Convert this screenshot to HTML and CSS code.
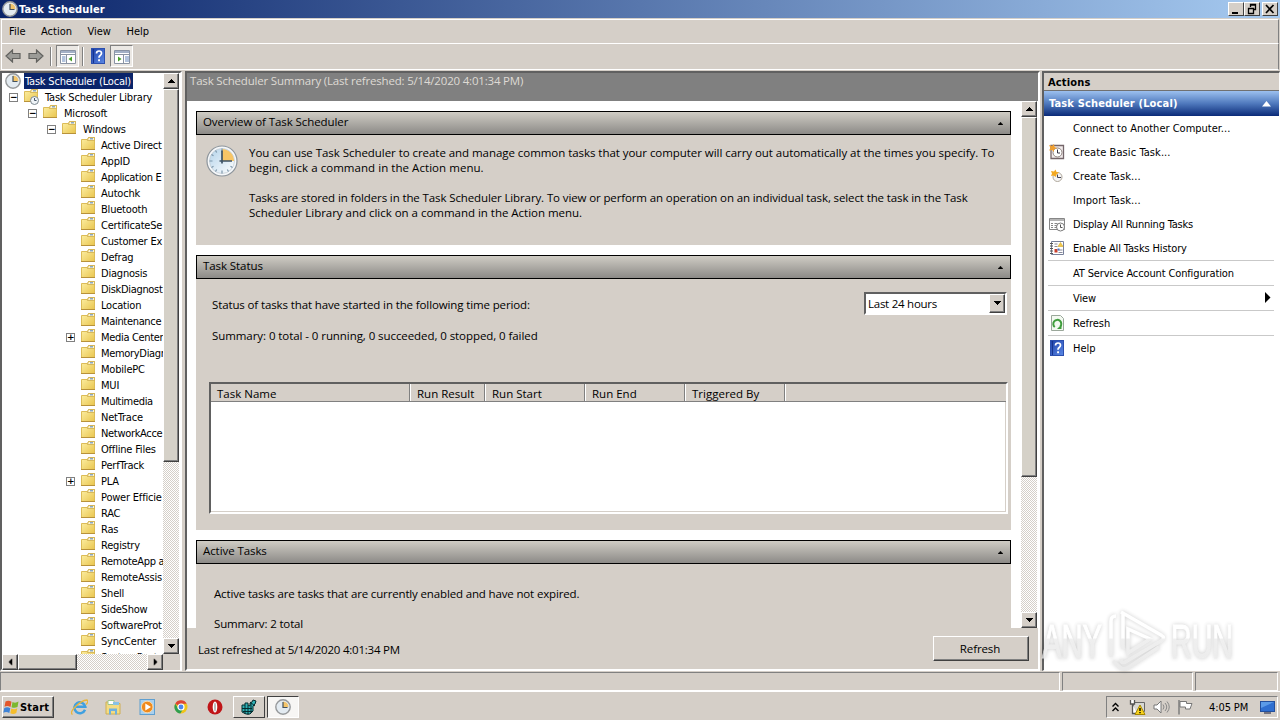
FILE: index.html
```html
<!DOCTYPE html>
<html lang="en">
<head>
<meta charset="utf-8">
<title>Task Scheduler</title>
<link rel="stylesheet" href="styles.css">
</head>
<body>
<svg class="defs" aria-hidden="true">
  <defs>
    <linearGradient id="gFolder" x1="0" y1="0" x2="1" y2="1"><stop offset="0" stop-color="#fdf0a6"/><stop offset="1" stop-color="#e9c54e"/></linearGradient>
    <linearGradient id="gFace" x1="0" y1="0" x2="1" y2="1"><stop offset="0" stop-color="#b4d3ea"/><stop offset="1" stop-color="#ffffff"/></linearGradient>
    <linearGradient id="gHelp" x1="0" y1="0" x2="1" y2="1"><stop offset="0" stop-color="#1c3fa8"/><stop offset="1" stop-color="#5c8ae6"/></linearGradient>
    <linearGradient id="gMark" gradientUnits="userSpaceOnUse" x1="0" y1="4" x2="0" y2="62"><stop offset="0" stop-color="#fff"/><stop offset=".5" stop-color="#fff"/><stop offset=".52" stop-color="#ececec"/><stop offset="1" stop-color="#e6e6e6"/></linearGradient>
    <symbol id="folder" viewBox="0 0 16 16">
      <path d="M1.500 2.500h6l1-2h6v12h-13z" fill="url(#gFolder)" stroke="#dcbc58"/>
      <path d="M7.500 3.500l1-3h6v3z" fill="#fff6cf" stroke="#c9a53e" stroke-width=".7"/><path d="M10 1.200h3v1.200h-3z" fill="#6f97c4"/>
      <path d="M1 12.500h14" stroke="#b8923a"/>
    </symbol>
    <symbol id="clock" viewBox="0 0 32 32">
      <circle cx="16" cy="16" r="15" fill="#f6f8fa" stroke="#8d959c" stroke-width="1.200"/>
      <circle cx="16" cy="16" r="12.500" fill="url(#gFace)" stroke="#c3ccd3" stroke-width=".8"/>
      <path d="M16 16V4a12 12 0 0 1 12 12z" fill="#f7c566"/>
      <path d="M16 3.500v3M16 25.500v3M3.500 16h3M9.500 5.500l1.200 2M5.500 9.500l2 1.200M5.500 22.500l2-1.200M9.500 26.500l1.200-2M22.500 26.500l-1.200-2M26.500 22.500l-2-1.200" stroke="#7d96aa" stroke-width="1.200"/>
      <path d="M16 5.500v13M13.500 16H26" stroke="#3f5366" stroke-width="1.700" fill="none"/>
    </symbol>
    <symbol id="clockSmall" viewBox="0 0 16 16">
      <circle cx="8" cy="8" r="7.200" fill="#e3ebf1" stroke="#96999b" stroke-width="1.400"/>
      <path d="M8 8V2.500A5.500 5.500 0 0 1 13.500 8z" fill="#f4c56a"/>
      <path d="M8 3v5.500h4.500" fill="none" stroke="#44525e" stroke-width="1.200"/>
    </symbol>
    <symbol id="help" viewBox="0 0 14 16">
      <rect x=".5" y=".5" width="13" height="15" fill="url(#gHelp)" stroke="#2c4fae"/><path d="M2.500 1v14" stroke="#16348e"/>
      <path d="M5.500 5.500q0-2.500 2.500-2.500t2.500 2.300q0 1.300-1.300 2.200t-1.200 2.200" fill="none" stroke="#fff" stroke-width="1.700"/><rect x="7.100" y="11.300" width="1.900" height="1.900" fill="#fff"/>
    </symbol>
    <symbol id="arrow" viewBox="0 0 16 14">
      <path d="M1 7l6.500-6v3.500H15v5H7.500V13z" fill="#9b9b97" stroke="#62625f" stroke-width="1.200"/>
    </symbol>
    <symbol id="up" viewBox="0 0 7 4"><path d="M0 4h7V3H6V2H5V1H4V0H3v1H2v1H1v1H0z" fill="currentColor"/></symbol>
    <symbol id="flag" viewBox="0 0 16 16"><path d="M2 1v14.500" stroke="#777" stroke-width="1.400"/><path d="M3 2.500h6.500v2h5.500l-2 5.500H8.500v-2H3z" fill="#fff" stroke="#777"/></symbol>
  </defs>
</svg>
<div class="desktop">
  <header class="titlebar">
    <svg class="i16"><use href="#clockSmall"/></svg>
    <span class="title">Task Scheduler</span>
    <div class="winbtns">
      <div class="wb"><svg width="14" height="12"><path d="M3 9h6v2H3z"/></svg></div>
      <div class="wb"><svg width="14" height="12"><path d="M5.500 4V1.500h5v5H9M5 2h6M3.500 5.500h5v5h-5zM3 5.500h6" fill="none" stroke="#000" stroke-width="1.300"/></svg></div>
      <div class="wb close"><svg width="14" height="12"><path d="M3 2l7.500 8M10.500 2L3 10" stroke="#000" stroke-width="1.700"/></svg></div>
    </div>
  </header>
  <nav class="menu"><span>File</span><span>Action</span><span>View</span><span>Help</span></nav>
  <div class="toolbar">
    <svg class="arr"><use href="#arrow"/></svg>
    <svg class="arr flip"><use href="#arrow"/></svg>
    <i class="tsep"></i>
    <div class="tog"><svg width="16" height="14"><path d="M.5.500h15v13H.5z" fill="#fff" stroke="#8a93a3"/><path d="M1 1h14v2H1z" fill="#a3b0c6"/><path d="M1 4.500h14M6.500 5v9" stroke="#8a93a3"/><path d="M2 7h3.500M2 9h3.500M2 11h3.500" stroke="#6688bb"/><path d="M12 6.500v5L8.500 9z" fill="#4aa02c"/></svg></div>
    <i class="tsep s2"></i>
    <svg class="hp"><use href="#help"/></svg>
    <div class="tog t2"><svg width="16" height="14"><path d="M.5.500h15v13H.5z" fill="#fff" stroke="#8a93a3"/><path d="M1 1h14v2H1z" fill="#a3b0c6"/><path d="M1 4.500h14M9.500 5v9" stroke="#8a93a3"/><path d="M11 7h4M11 9h4M11 11h4" stroke="#6688bb"/><path d="M4 6.500v5L7.500 9z" fill="#4aa02c"/></svg></div>
  </div>
  <main class="panes">
    <section class="tree">
      <div class="treerow">
        <div class="list">
          <div class="row l0"><svg class="i16"><use href="#clockSmall"/></svg><span class="sel">Task Scheduler (Local)</span></div>
          <div class="row l1"><b class="ex">−</b><svg class="i16"><use href="#folder"/><circle cx="11.500" cy="11.500" r="4" fill="#eef3f7" stroke="#7b8790"/><path d="M11.500 9v2.500h2" fill="none" stroke="#456"/></svg><span>Task Scheduler Library</span></div>
          <div class="row l2"><b class="ex">−</b><svg class="i16"><use href="#folder"/></svg><span>Microsoft</span></div>
          <div class="row l3"><b class="ex">−</b><svg class="i16"><use href="#folder"/></svg><span>Windows</span></div>
          <div class="row"><svg class="i16"><use href="#folder"/></svg><span>Active Direct</span></div>
          <div class="row"><svg class="i16"><use href="#folder"/></svg><span>AppID</span></div>
          <div class="row"><svg class="i16"><use href="#folder"/></svg><span class="tight">Application E</span></div>
          <div class="row"><svg class="i16"><use href="#folder"/></svg><span>Autochk</span></div>
          <div class="row"><svg class="i16"><use href="#folder"/></svg><span>Bluetooth</span></div>
          <div class="row"><svg class="i16"><use href="#folder"/></svg><span>CertificateSe</span></div>
          <div class="row"><svg class="i16"><use href="#folder"/></svg><span>Customer Ex</span></div>
          <div class="row"><svg class="i16"><use href="#folder"/></svg><span>Defrag</span></div>
          <div class="row"><svg class="i16"><use href="#folder"/></svg><span>Diagnosis</span></div>
          <div class="row"><svg class="i16"><use href="#folder"/></svg><span class="tight">DiskDiagnost</span></div>
          <div class="row"><svg class="i16"><use href="#folder"/></svg><span>Location</span></div>
          <div class="row"><svg class="i16"><use href="#folder"/></svg><span class="tight">Maintenance</span></div>
          <div class="row l4"><b class="ex">+</b><svg class="i16"><use href="#folder"/></svg><span class="tight">Media Center</span></div>
          <div class="row"><svg class="i16"><use href="#folder"/></svg><span class="tight">MemoryDiagr</span></div>
          <div class="row"><svg class="i16"><use href="#folder"/></svg><span>MobilePC</span></div>
          <div class="row"><svg class="i16"><use href="#folder"/></svg><span>MUI</span></div>
          <div class="row"><svg class="i16"><use href="#folder"/></svg><span class="tight">Multimedia</span></div>
          <div class="row"><svg class="i16"><use href="#folder"/></svg><span>NetTrace</span></div>
          <div class="row"><svg class="i16"><use href="#folder"/></svg><span class="tight">NetworkAcce</span></div>
          <div class="row"><svg class="i16"><use href="#folder"/></svg><span>Offline Files</span></div>
          <div class="row"><svg class="i16"><use href="#folder"/></svg><span>PerfTrack</span></div>
          <div class="row l4"><b class="ex">+</b><svg class="i16"><use href="#folder"/></svg><span>PLA</span></div>
          <div class="row"><svg class="i16"><use href="#folder"/></svg><span>Power Efficie</span></div>
          <div class="row"><svg class="i16"><use href="#folder"/></svg><span>RAC</span></div>
          <div class="row"><svg class="i16"><use href="#folder"/></svg><span>Ras</span></div>
          <div class="row"><svg class="i16"><use href="#folder"/></svg><span>Registry</span></div>
          <div class="row"><svg class="i16"><use href="#folder"/></svg><span class="tight">RemoteApp a</span></div>
          <div class="row"><svg class="i16"><use href="#folder"/></svg><span>RemoteAssis</span></div>
          <div class="row"><svg class="i16"><use href="#folder"/></svg><span>Shell</span></div>
          <div class="row"><svg class="i16"><use href="#folder"/></svg><span>SideShow</span></div>
          <div class="row"><svg class="i16"><use href="#folder"/></svg><span>SoftwareProt</span></div>
          <div class="row"><svg class="i16"><use href="#folder"/></svg><span>SyncCenter</span></div>
          <div class="row"><svg class="i16"><use href="#folder"/></svg><span>SystemRest</span></div>
        </div>
        <div class="vs"><div class="sb"><svg class="tri"><use href="#up"/></svg></div><div class="thumb tv"></div><i class="grow"></i><div class="sb"><svg class="tri down"><use href="#up"/></svg></div></div>
      </div>
      <div class="hrow"><div class="hs"><div class="sb"><svg class="tri left"><use href="#up"/></svg></div><div class="thumb th"></div><i class="grow"></i><div class="sb"><svg class="tri right"><use href="#up"/></svg></div></div></div>
    </section>
    <section class="center">
      <div class="chead seg">Task Scheduler Summary (Last refreshed: 5/14/2020 4:01:34 PM)</div>
      <div class="cbody">
        <div class="cards">
          <article class="card c1">
            <h2 class="seg"><span>Overview of Task Scheduler</span><svg class="cu"><use href="#up"/></svg></h2>
            <div class="over seg">
              <svg class="i32"><use href="#clock"/></svg>
              <div class="paras"><p class="first">You can use Task Scheduler to create and manage common tasks that your computer will carry out automatically at the times you specify. To</p><p>begin, click a command in the Action menu.</p><p class="gap">Tasks are stored in folders in the Task Scheduler Library. To view or perform an operation on an individual task, select the task in the Task</p><p class="last">Scheduler Library and click on a command in the Action menu.</p></div>
            </div>
          </article>
          <article class="card c2">
            <h2 class="seg"><span>Task Status</span><svg class="cu"><use href="#up"/></svg></h2>
            <div class="status seg">
              <div class="sline"><span class="s1">Status of tasks that have started in the following time period:</span><div class="combo"><span>Last 24 hours</span><div class="sb"><svg class="tri down"><use href="#up"/></svg></div></div></div>
              <div class="sum">Summary: 0 total - 0 running, 0 succeeded, 0 stopped, 0 failed</div>
              <div class="table"><div class="thead"><span>Task Name</span><span>Run Result</span><span>Run Start</span><span>Run End</span><span>Triggered By</span></div></div>
            </div>
          </article>
          <article class="card c3">
            <h2 class="seg"><span>Active Tasks</span><svg class="cu"><use href="#up"/></svg></h2>
            <div class="active seg"><p>Active tasks are tasks that are currently enabled and have not expired.</p><p class="a2">Summary: 2 total</p></div>
          </article>
        </div>
        <div class="vs"><div class="sb"><svg class="tri"><use href="#up"/></svg></div><div class="thumb cv"></div><i class="grow"></i><div class="sb"><svg class="tri down"><use href="#up"/></svg></div></div>
      </div>
      <footer class="cfoot seg"><span>Last refreshed at 5/14/2020 4:01:34 PM</span><div class="btn">Refresh</div></footer>
    </section>
    <aside class="actions">
      <div class="ahead">Actions</div>
      <div class="agrad"><span>Task Scheduler (Local)</span><svg class="au"><path d="M0 5.500h9L4.500 0z" fill="#fff"/></svg></div>
      <div class="a"><i class="i16"></i><span class="wide">Connect to Another Computer...</span></div>
      <div class="a"><svg class="i16"><path d="M2 1.500h12.500v13H2z" fill="#f2ecec" stroke="#74666a" stroke-width="1.300"/><circle cx="8.500" cy="8.500" r="4.500" fill="#fff" stroke="#8f8380"/><path d="M8.500 5.500v3.500H11" fill="none" stroke="#334"/><path d="M0 1l3 1 2-2 .5 3L8 4 5 5.500 5 8 3 6 0 6.500l1.500-2.500z" fill="#f0a030"/></svg><span class="wider">Create Basic Task...</span></div>
      <div class="a"><svg class="i16"><circle cx="8.500" cy="9" r="4.500" fill="#f4f4f4" stroke="#b0a89c"/><path d="M8.500 6.500V9.500H12" fill="none" stroke="#445"/><path d="M2 3l3 .5 1.500-2 1 2.500 2.500.5-2.500 2L7 9 4.500 7.500 2 8l1-2.500z" fill="#f3a922"/></svg><span class="wider">Create Task...</span></div>
      <div class="a"><i class="i16"></i><span class="wider">Import Task...</span></div>
      <div class="a"><svg class="i16"><path d="M.5 2.500h15v11H.5z" fill="#fff" stroke="#868686"/><path d="M1 3h14v2H1z" fill="#b5b5b5"/><path d="M2 7.500h2M5.500 7.500h3M2 9.500h2M5.500 9.500h3M2 11.500h2M5.500 11.500h3" stroke="#888"/><circle cx="11.500" cy="11" r="4" fill="#fff" stroke="#7a7a7a"/><path d="M11.500 8.500V11.500h2" fill="none" stroke="#555"/></svg><span class="tight">Display All Running Tasks</span></div>
      <div class="a"><svg class="i16"><path d="M2.500 1.500h12v13h-12z" fill="#fff" stroke="#77809a"/><path d="M1 3.500h3M1 6h3M1 8.500h3M1 11h3M1 13.500h3" stroke="#555"/><path d="M5.500 4h3M5.500 6.500h3M9.500 10h4M9.500 12.500h4" stroke="#8a8a9a"/><path d="M9 6.500l2.500-4 2.500 4z" fill="#f2c84a" stroke="#d4a82a" stroke-width=".6"/><path d="M5.500 9h3v3.500h-3z" fill="#c8402c"/><path d="M8.500 8.500h2v2h-2z" fill="#4a74c8"/></svg><span>Enable All Tasks History</span></div>
      <hr>
      <div class="a"><i class="i16"></i><span>AT Service Account Configuration</span></div>
      <hr>
      <div class="a"><i class="i16"></i><span>View</span><svg class="sub"><path d="M0 0l5.500 5.500L0 11z"/></svg></div>
      <hr>
      <div class="a"><svg class="i16"><path d="M2.500.5h9l3 3v12h-12z" fill="#f3f9f1" stroke="#9aa79a"/><path d="M5.800 12a4 4 0 1 1 5.500-.5" fill="none" stroke="#3f9d3c" stroke-width="2"/><path d="M12.500 9.500v4.500H8z" fill="#3f9d3c"/></svg><span class="wide">Refresh</span></div>
      <hr>
      <div class="a"><svg class="i16"><use href="#help"/></svg><span class="wide">Help</span></div>
    </aside>
  </main>
  <div class="sbar"><i class="s-a"></i><i class="s-b"></i><i class="s-c"></i></div>
  <footer class="taskbar">
    <div class="start"><svg width="17" height="16"><path d="M2.500 2.500q3-1.800 6 .2L7.500 8q-3-1.700-6-.3z" fill="#e4572b"/><path d="M9.500 3q3 1.500 6-.5L14.500 8q-3 1.500-6 .2z" fill="#7cb82f"/><path d="M1.300 9q3-1.500 6 .2L6.300 14q-3-1.700-6-.2z" fill="#3f83d6"/><path d="M8.300 9.500q3 1.500 6-.2L13.300 14q-3 1.800-6 .2z" fill="#f5bd2b"/></svg><b>Start</b></div>
    <div class="quick">
      <svg class="q"><path d="M14 10.800a5.500 5.500 0 1 1 .3-3H5" fill="none" stroke="#3fa0e0" stroke-width="2.500"/><path d="M1.500 15.500q-3-2 3-8T16 1q2 1.500-1 4.500" fill="none" stroke="#e9b63a" stroke-width="1.300"/></svg>
      <svg class="q"><path d="M1 3h5l1 1.500h8V15H1z" fill="#f3dc82" stroke="#cfae52"/><path d="M3 1.500h6v4H3z" fill="#fff" stroke="#9cc58c"/><path d="M8 3h6v3H8z" fill="#86c2e6"/><path d="M4 15.500V9.500h8v6H10V12H6v3.500z" fill="#6fb0dd"/></svg>
      <svg class="q"><rect x="1" y="0.500" width="14.500" height="15" fill="#a9d0ee" stroke="#5f9fd0"/><circle cx="8.200" cy="8" r="5.800" fill="#f08a1c" stroke="#fbd9a8"/><path d="M6.300 4.500v7L12 8z" fill="#fff"/></svg>
      <svg class="q"><circle cx="8" cy="8" r="6.500" fill="#f0c419"/><path d="M8 8L2.300 4.700A6.500 6.500 0 0 1 13.700 4.800L8 4.800z" fill="#dd4436"/><path d="M2.300 4.700A6.500 6.500 0 0 0 7.300 14.500L10.500 9.500 5.200 9.500z" fill="#2f9e50"/><circle cx="8" cy="8" r="3" fill="#4b86ee" stroke="#fff" stroke-width="1.200"/></svg>
      <svg class="q"><circle cx="8" cy="8" r="7.500" fill="#c01518"/><ellipse cx="8" cy="8" rx="2.300" ry="5.500" fill="#fff"/><ellipse cx="8" cy="8" rx="1" ry="4.500" fill="#b9b9b9"/></svg>
    </div>
    <div class="tb raised"><svg width="18" height="16"><path d="M2 6h3V4h3v2l2 1V4l2-1 1-2 3 1-1 3-2 2v5l-3 3H6l-4-2z" fill="#2fb0b5" stroke="#052c2e"/><path d="M2 9.500h10M3 12.500h9M5 6v9M8 6v10M11 4v10M10 3l5 4" stroke="#052c2e"/></svg></div>
    <div class="tb pressed"><svg width="16" height="16"><use href="#clockSmall"/></svg></div>
    <div class="tray">
      <svg width="7" height="10"><path d="M.5 4.500l3-3 3 3M.5 9l3-3 3 3" fill="none" stroke="#000" stroke-width="1.400"/></svg>
      <svg class="t-net" width="17" height="16"><path d="M4.500 3.500h11v9h-11z" fill="#d8d8d4" stroke="#666"/><path d="M1.500 1v4h4V1M3.500 5v9.500H8" fill="#fff" stroke="#555" stroke-width="1.300"/><path d="M11 6l5 9.500H6z" fill="#f8d21c" stroke="#a58600"/><path d="M11 9v3M11 13v1.300" stroke="#000" stroke-width="1.400"/></svg>
      <svg class="t-vol" width="17" height="14"><path d="M1 5h3l4-4v12L4 9H1z" fill="#fff" stroke="#777"/><path d="M10 4.500q2 2.500 0 5M12 3q3.500 4 0 8M14 1.500q4.500 5.500 0 11" fill="none" stroke="#888"/></svg>
      <svg class="t-flag" width="16" height="16"><use href="#flag"/></svg>
      <span class="time">4:05 PM</span>
      <svg class="t-desk" width="15" height="13"><rect x=".5" y=".5" width="14" height="10" fill="#2f6fd0" stroke="#234f9c"/><path d="M1 1h13L1 7z" fill="#5b9be8"/><path d="M4 12h7" stroke="#556" stroke-width="1.500"/></svg>
    </div>
  </footer>
  <svg class="mark" width="200" height="70" viewBox="0 0 200 70">
    <g class="mtext"><text x="5" y="53" textLength="60" lengthAdjust="spacingAndGlyphs">ANY</text><text x="134" y="53" textLength="62" lengthAdjust="spacingAndGlyphs">RUN</text></g>
    <path class="mlogo" d="M79 11q-5 0-5 5v36M86 9v35M84 7l40 23q5 3 0 6L90 56q-6 4-6-2M91 24v24l22-14zM76 56l8 7q4 2 8-1l30-20"/>
  </svg>
</div>
</body>
</html>
```
FILE: styles.css
```css
* { box-sizing: border-box; }
body { margin: 0; width: 1280px; height: 720px; overflow: hidden; background: #d5cfc8; font: 11px/16px "DejaVu Sans Condensed", "DejaVu Sans", sans-serif; font-stretch: condensed; letter-spacing: -0.2px; color: #000; }
.defs { position: absolute; width: 0; height: 0; }
svg { display: block; flex: none; }
.desktop { position: relative; display: flex; flex-direction: column; width: 1280px; height: 720px; white-space: nowrap; }
.i16 { width: 16px; height: 16px; flex: none; }
.titlebar { height: 18px; display: flex; align-items: center; padding: 0 2px; gap: 1px; background: linear-gradient(90deg, #0a246a, #a6caf0); color: #fff; font-weight: bold; letter-spacing: 0.15px; }
.title { flex: 1; padding-top: 2px; }
.winbtns { display: flex; }
.wb { width: 16px; height: 14px; background: #d5cfc8; border: 1px solid; border-color: #fff #404040 #404040 #fff; }
.wb.close { margin-left: 2px; }
.menu { height: 25px; border: 1px solid #fff; border-color: #fff #808080 #fff #fff; margin: 1px 1px 0; display: flex; align-items: center; padding: 2px 0 0 7px; gap: 15.5px; letter-spacing: 0; }
.toolbar { height: 26px; margin: 0 1px; border: solid; border-width: 0 1px 1px; border-color: #fff #808080 #fff #fff; display: flex; align-items: center; padding-left: 3px; }
.arr { width: 16px; height: 14px; }
.flip { transform: scaleX(-1); margin-left: 7px; }
.tsep { width: 2px; height: 19px; border-left: 1px solid #808080; border-right: 1px solid #fff; margin-left: 6px; }
.tsep.s2 { margin-left: 3px; }
.tog { width: 23px; height: 22px; margin-left: 4px; padding: 4px 3px; background: #ebe8e4; border: 1px solid; border-color: #808080 #fff #fff #808080; }
.t2 { margin-left: 5px; }
.hp { width: 14px; height: 16px; margin-left: 7px; }
.panes { display: flex; height: 601px; margin-top: 1px; }
.tree { width: 182px; border: 2px solid; border-color: #606060 #fff #fff #606060; display: flex; flex-direction: column; height: 600px; }
.treerow { display: flex; height: 581px; background: #fff; }
.list { width: 161px; overflow: hidden; }
.row { display: flex; height: 16px; padding-left: 78px; }
.row span { margin-left: 4px; padding: 0 0 0 1px; line-height: 17px; height: 16px; }
.row .sel { background: #0a246a; color: #fff; padding-right: 2px; }
.row .tight { letter-spacing: -0.32px; }
.l0 { padding-left: 3px; } .l0 .sel { margin-left: 3px; } .l1 { padding-left: 7px; } .l2 { padding-left: 26px; } .l3 { padding-left: 45px; } .l4 { padding-left: 64px; }
.l1 svg, .l2 svg, .l3 svg, .l4 svg { margin-left: 5px; }
.l1 span, .l2 span, .l3 span { margin-left: 5px; }
.ex { width: 9px; height: 9px; margin-top: 4px; border: 1px solid #808080; font: bold 9px/7px "DejaVu Sans", sans-serif; text-align: center; letter-spacing: 0; }
.vs { width: 16px; display: flex; flex-direction: column; background: repeating-conic-gradient(#fff 0 25%, #d5cfc8 0 50%) 0 0/2px 2px; }
.sb { width: 16px; height: 16px; flex: none; background: #d5cfc8; border: 1px solid; border-color: #fff #404040 #404040 #fff; box-shadow: inset -1px -1px #808080; display: flex; align-items: center; justify-content: center; }
.tri { width: 7px; height: 4px; } .down { transform: rotate(180deg); } .left { transform: rotate(-90deg); } .right { transform: rotate(90deg); }
.thumb { background: #d5d1c8; border: 1px solid; border-color: #fff #404040 #404040 #fff; box-shadow: inset -1px -1px #808080; }
.tv { height: 373px; } .th { width: 59px; height: 16px; } .cv { height: 360px; }
.grow { flex: 1; }
.hrow { height: 16px; background: #d5cfc8; }
.hs { width: 161px; display: flex; background: repeating-conic-gradient(#fff 0 25%, #d5cfc8 0 50%) 0 0/2px 2px; }
.center { width: 855px; margin-left: 3px; border: 2px solid; border-color: #606060 #fff #fff #606060; height: 600px; }
.seg { font-family: "Open Sans", sans-serif; font-size: 11.5px; font-stretch: normal; letter-spacing: -0.12px; }
.chead { height: 28px; background: #808080; color: #dedad4; padding: 0 3px; letter-spacing: -0.19px; }
.cbody { height: 527px; display: flex; background: #fff; overflow: hidden; }
.cards { width: 834px; padding: 10px 10px 0 9px; overflow: hidden; }
.card { width: 815px; background: #d5cfc8; margin-bottom: 10px; }
.c1 { height: 134px; } .c2 { height: 275px; } .c3 { height: 150px; }
.card h2 { margin: 0; height: 24px; border: 1px solid #000; background: linear-gradient(#cfccc4, #8c8a87); font-weight: normal; display: flex; justify-content: space-between; align-items: center; padding: 0 7px 2px 6px; letter-spacing: -0.08px; }
.cu { width: 5px; height: 3px; margin-top: 3px; }
.over { display: flex; padding: 10px 0 0 10px; }
.i32 { width: 32px; height: 32px; }
.paras { margin-left: 11px; line-height: 15px; }
p { margin: 0; }
.first { letter-spacing: -0.05px; } .last { letter-spacing: -0.02px; }
.paras p:nth-child(2) { letter-spacing: 0.05px; }
.gap { margin-top: 15px; }
.status { padding: 13px 4px 0 13px; }
.sline { display: flex; justify-content: space-between; align-items: center; height: 23px; padding-left: 3px; }
.s1 { padding-top: 3px; }
.combo { width: 143px; height: 23px; background: #fff; border: 2px solid; border-color: #606060 #fff #fff #606060; display: flex; justify-content: space-between; align-items: center; padding-left: 2px; letter-spacing: -0.25px; }
.combo span { padding-top: 1px; }
.combo .sb { height: 19px; }
.sum { margin: 13px 0 0 3px; height: 16px; letter-spacing: -0.07px; }
.table { width: 799px; height: 132px; margin-top: 38px; background: #fff; border: 2px solid; border-color: #606060 #fff #fff #606060; box-shadow: inset -1px -1px #d5cfc8; }
.thead { display: flex; height: 18px; background: #d5cfc8; border-bottom: 1px solid #808080; line-height: 20px; letter-spacing: 0; }
.thead span { width: 100px; padding-left: 7px; border-right: 1px solid #808080; box-shadow: 1px 0 #fff; }
.thead span:first-child { width: 199px; padding-left: 6px; } .thead span:nth-child(2) { width: 75px; }
.active { padding: 21px 0 0 18px; letter-spacing: -0.15px; } .active p { line-height: 17px; } .a2 { margin-top: 13px; }
.cfoot { height: 42px; display: flex; justify-content: space-between; padding: 8px 9px 0 11px; line-height: 27px; letter-spacing: -0.22px; }
.btn { width: 96px; height: 25px; border: 1px solid; border-color: #fff #404040 #404040 #fff; box-shadow: inset -1px -1px #808080; text-align: center; line-height: 24px; letter-spacing: -0.1px; padding-right: 2px; }
.actions { width: 238px; margin-left: 2px; background: #fff; border: solid; border-width: 2px 1px 1px 2px; border-color: #606060 #fff #fff #606060; height: 600px; letter-spacing: -0.13px; }
.ahead { height: 18px; background: #d5cfc8; border-bottom: 1px solid #707070; font-weight: bold; padding-left: 4px; line-height: 19px; letter-spacing: 0.15px; }
.agrad { height: 25px; background: linear-gradient(#9cc0ef, #4f79bd 50%, #0a2a78); color: #fff; font-weight: bold; display: flex; justify-content: space-between; align-items: center; padding: 2px 8px 0 5px; letter-spacing: 0.15px; }
.au { width: 9px; height: 6px; }
.a { display: flex; align-items: center; height: 24px; padding-left: 5px; }
.a span { margin-left: 8px; padding-top: 2px; }
.a .wide { letter-spacing: 0; } .a .wider { letter-spacing: 0.08px; } .a .tight { letter-spacing: -0.2px; }
.sub { width: 6px; height: 11px; margin-left: auto; margin-right: 8px; }
hr { border: 0; height: 1px; background: #c9c9c9; margin: 0 5px 0 4px; }
.sbar { height: 20px; margin-top: 1px; display: flex; gap: 2px; border-bottom: 1px solid #fff; }
.sbar i { height: 19px; border: 1px solid; border-color: #808080 #fff #fff #808080; }
.s-a { width: 1060px; } .s-b { width: 131px; } .s-c { width: 83px; }
.taskbar { height: 28px; display: flex; padding: 4px 2px 0; }
.start { width: 52px; height: 22px; display: flex; align-items: center; border: 1px solid; border-color: #fff #404040 #404040 #fff; box-shadow: inset -1px -1px #808080; letter-spacing: 0.2px; }
.start b { padding-top: 1px; }
.quick { display: flex; align-items: center; gap: 17px; margin-left: 17px; height: 22px; }
.q { width: 17px; height: 17px; }
.tb { width: 32px; height: 22px; display: flex; align-items: center; justify-content: center; border: 1px solid; border-color: #fff #404040 #404040 #fff; margin-left: 9px; }
.pressed { margin-left: 2px; background: #f7f6f4; border-color: #404040 #fff #fff #404040; }
.tray { width: 172px; height: 22px; margin-left: auto; border: 1px solid; border-color: #808080 #fff #fff #808080; display: flex; align-items: center; padding-left: 5px; }
.t-net { margin-left: 10px; } .t-vol { margin-left: 7px; } .t-flag { margin-left: 7px; } .time { margin-left: 16px; width: 41px; padding-top: 1px; letter-spacing: -0.1px; } .t-desk { margin-left: 10px; }
.mark { position: absolute; left: 1037px; top: 605px; filter: drop-shadow(0 0 2px rgba(0,0,0,.25)); opacity: .8; }
.mtext { font: 49px "Liberation Sans", sans-serif; fill: url(#gMark); stroke: url(#gMark); stroke-width: 1px; letter-spacing: 0; }
.mlogo { fill: none; stroke: url(#gMark); stroke-width: 3.5; }
```
